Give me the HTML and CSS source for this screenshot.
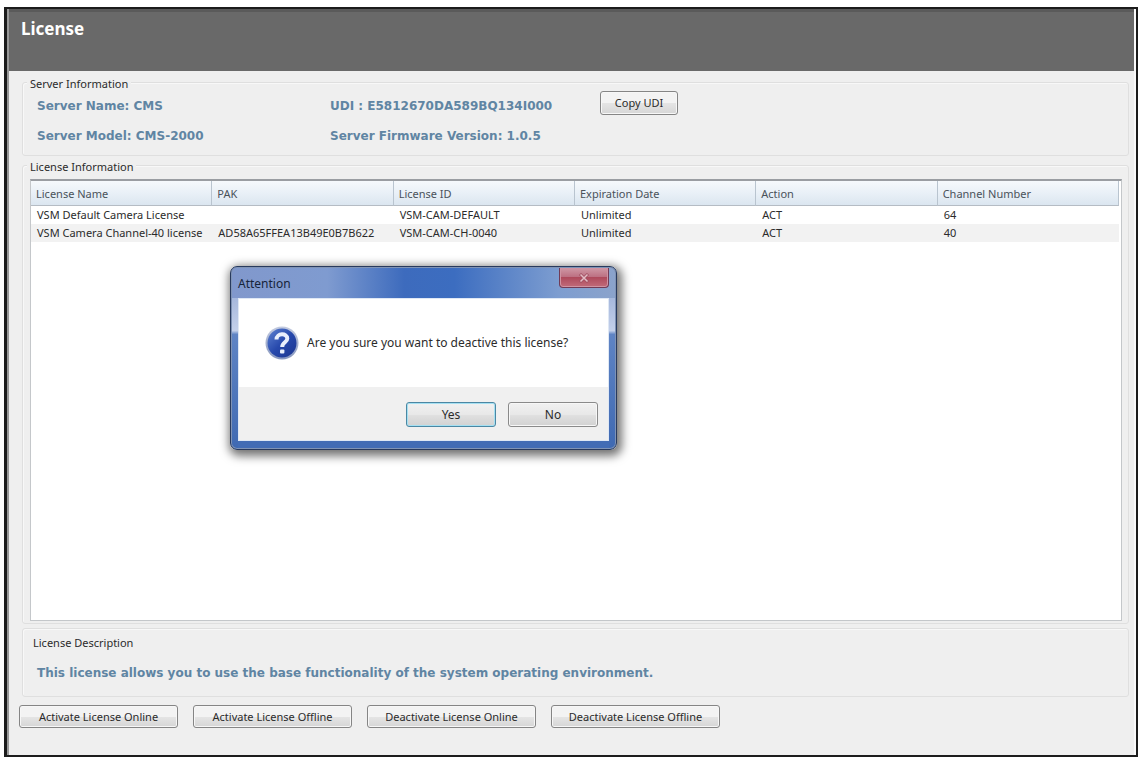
FILE: index.html
```html
<!DOCTYPE html>
<html lang="en">
<head>
<meta charset="utf-8">
<title>License</title>
<link rel="stylesheet" href="styles.css">
</head>
<body>
<div class="window">
  <header class="banner"><h1>License</h1></header>
  <main class="content">
    <section class="group server" aria-labelledby="server-title">
      <h2 class="group-title" id="server-title">Server Information</h2>
      <div class="facts">
        <p class="fact">Server Name: CMS</p>
        <p class="fact">UDI : E5812670DA589BQ134I000</p>
        <button type="button" class="button copy">Copy UDI</button>
        <p class="fact">Server Model: CMS-2000</p>
        <p class="fact">Server Firmware Version: 1.0.5</p>
      </div>
    </section>
    <section class="group licenses" aria-labelledby="list-title">
      <h2 class="group-title" id="list-title">License Information</h2>
      <div class="list">
        <table class="table">
          <thead>
            <tr><th>License Name</th><th>PAK</th><th>License ID</th><th>Expiration Date</th><th>Action</th><th>Channel Number</th></tr>
          </thead>
          <tbody>
            <tr><td>VSM Default Camera License</td><td></td><td>VSM-CAM-DEFAULT</td><td>Unlimited</td><td>ACT</td><td>64</td></tr>
            <tr><td>VSM Camera Channel-40 license</td><td>AD58A65FFEA13B49E0B7B622</td><td>VSM-CAM-CH-0040</td><td>Unlimited</td><td>ACT</td><td>40</td></tr>
          </tbody>
        </table>
      </div>
    </section>
    <section class="group description" aria-labelledby="desc-title">
      <h2 class="desc-title" id="desc-title">License Description</h2>
      <p class="fact">This license allows you to use the base functionality of the system operating environment.</p>
    </section>
  </main>
  <footer class="actions">
    <button type="button" class="button">Activate License Online</button>
    <button type="button" class="button">Activate License Offline</button>
    <button type="button" class="button wide">Deactivate License Online</button>
    <button type="button" class="button wide">Deactivate License Offline</button>
  </footer>

  <div class="dialog" role="dialog" aria-labelledby="dialog-title">
    <div class="dialog-bar">
      <h2 class="dialog-title" id="dialog-title">Attention</h2>
      <button type="button" class="close" aria-label="Close">
        <svg width="12" height="10" viewBox="0 0 12 10" aria-hidden="true"><path d="M2 1l8 8M10 1L2 9" stroke="#a04f62" stroke-width="3"/><path d="M2.500 1.500l7 7M9.500 1.500l-7 7" stroke="#e3bcc5" stroke-width="1.500"/></svg>
      </button>
    </div>
    <div class="dialog-client">
      <div class="message">
        <svg class="question" width="34" height="34" viewBox="0 0 34 34" aria-hidden="true">
          <defs>
            <linearGradient id="rim" x1="0" y1="0" x2="0" y2="1"><stop offset="0" stop-color="#c3cbe0"/><stop offset="1" stop-color="#8797bf"/></linearGradient>
            <linearGradient id="disc" x1="0" y1="0" x2="1" y2="1"><stop offset="0" stop-color="#5f83d2"/><stop offset=".5" stop-color="#2749ac"/><stop offset="1" stop-color="#1c3590"/></linearGradient>
          </defs>
          <circle cx="17" cy="17" r="16.500" fill="url(#rim)"/>
          <circle cx="17" cy="17" r="14.500" fill="url(#disc)"/>
          <path d="M11.500 13.500C11.500 6.800 22.300 6.800 22.300 12.500C22.300 16.500 17.200 16.200 17.200 21" fill="none" stroke="#e9effc" stroke-width="4"/>
          <rect x="15" y="23.500" width="4.400" height="4" rx="1" fill="#e9effc"/>
        </svg>
        <p>Are you sure you want to deactive this license?</p>
      </div>
      <div class="choices">
        <button type="button" class="choice primary">Yes</button>
        <button type="button" class="choice">No</button>
      </div>
    </div>
  </div>
</div>
</body>
</html>
```
FILE: styles.css
```css
* { box-sizing: border-box; }
body {
  margin: 0;
  padding: 7px 1px 0 4px;
  background: #fff;
  color: #2b2b2b;
  font-family: "Noto Sans", "Open Sans", sans-serif;
  font-size: 11px;
  line-height: 16px;
}
h1, h2, p { margin: 0; font-weight: normal; }
button { font: inherit; color: inherit; padding: 0; }
.window {
  position: relative;
  display: flex;
  flex-direction: column;
  min-height: calc(100vh - 7px);
  border: 2px solid #1c1c1c;
  border-left-width: 3px;
  background: #efefef;
  box-shadow: inset 2px 0 #999, inset -2px 0 #fafafa;
}
.banner {
  height: 62px;
  margin: 0 2px;
  padding: 8px 12px;
  background: #696969;
  border-top: 3px solid #5a5a5a;
}
.banner h1 {
  color: #fff;
  font-weight: bold;
  font-size: 17px;
  line-height: 18px;
}
.content {
  flex: 1;
  display: flex;
  flex-direction: column;
  gap: 9px;
  padding: 11px 7px 0 15px;
}
.group { border: 1px solid #dfdfdf; border-radius: 3px; box-shadow: inset 1px 1px #f8f8f8; }
.group-title {
  width: max-content;
  height: 16px;
  margin: -8px 0 0 4px;
  padding: 0 3px;
  background: #efefef;
  font-size: 11px;
  line-height: 18px;
}
.facts {
  display: grid;
  grid-template-columns: 293px 270px 78px;
  grid-template-rows: 30px 30px;
  align-items: center;
  padding: 0 14px 4px;
}
.fact {
  color: #6085a3;
  font-family: "DejaVu Sans", sans-serif;
  font-weight: bold;
  font-size: 12px;
  line-height: 20px;
}
.button {
  width: 159px;
  height: 23px;
  border: 1px solid #858585;
  border-radius: 3px;
  background: linear-gradient(#f3f3f3 0 50%, #e5e5e5 50%, #d6d6d6);
  box-shadow: inset 0 0 0 1px #f7f7f7;
}
.button.wide { width: 169px; }
.button.copy { align-self: start; width: 78px; height: 24px; }
.licenses { flex: 1; display: flex; flex-direction: column; }
.list {
  flex: 1;
  margin: 5px 6px 2px 7px;
  background: #fff;
  border: 1px solid #c4c7ca;
  border-top: 2px solid #9a9da2;
  padding-right: 2px;
}
.table { width: 100%; table-layout: fixed; border-collapse: separate; border-spacing: 0; }
th {
  height: 25px;
  padding: 2px 5px 0;
  text-align: left;
  font-weight: normal;
  color: #4a525a;
  background: linear-gradient(#f6f9fc, #e9f0f7 50%, #dbe6f0);
  border-right: 1px solid #b9c4cf;
  border-bottom: 1px solid #b5bcc4;
}
td { height: 18px; padding: 0 6px; white-space: nowrap; }
tbody tr:nth-child(even) { background: #f2f2f2; }
.description { margin-top: -5px; padding: 6px 14px 13px; }
.desc-title { font-size: 11px; line-height: 16px; margin: 0 0 12px -4px; }
.actions { display: flex; gap: 15px; padding: 8px 12px 27px; }
.dialog {
  position: absolute;
  top: 257px;
  left: 223px;
  width: 387px;
  padding: 1px 7px 8px;
  border: 1px solid #283a5e;
  border-radius: 7px;
  background:
    linear-gradient(90deg, transparent 7px, #426cb5 7px calc(100% - 7px), transparent 0) 0 100% / 100% 8px no-repeat,
    linear-gradient(90deg, #8198cc, #7f9bd0 25%, #3d6bbd 45%, #3c6dc0 58%, #7d9dd0 85%, #8ba3cb) 0 0 / 100% 31px no-repeat,
    linear-gradient(#8ba1cf, #c3d0ea 35%, #5f84c4 37%, #3f69b2);
  box-shadow: inset 0 0 0 1px #7f93b5, 2px 3px 10px 3px rgba(0, 0, 0, .55);
}
.dialog-bar { display: flex; justify-content: space-between; height: 30px; }
.dialog-title { font-size: 12px; line-height: 32px; color: #17243a; }
.close {
  width: 50px;
  height: 20px;
  display: grid;
  place-items: center;
  border: 1px solid #713b56;
  border-top: 0;
  border-radius: 0 0 4px 4px;
  background: linear-gradient(#cf98a5, #bd7183 45%, #ae4a5c 50%, #c16b7a);
  box-shadow: inset 0 0 0 1px #cf93a2;
}
.dialog-client { border: 1px solid #dfe8f5; background: #f0f0f0; }
.message {
  display: flex;
  align-items: center;
  gap: 8px;
  height: 88px;
  padding-left: 26px;
  background: #fff;
  font-size: 12px;
}
.choices { display: flex; justify-content: flex-end; gap: 12px; padding: 15px 10px 13px; }
.choice {
  width: 90px;
  height: 25px;
  border: 1px solid #8a8a8a;
  border-radius: 3px;
  background: linear-gradient(#f1f1f1, #e8e8e8 50%, #dfdfdf 55%, #d2d2d2);
  box-shadow: inset 0 0 0 1px #f7f7f7;
  font-size: 12px;
}
.primary { border-color: #4b87a3; box-shadow: inset 0 0 0 1px #a5e0f2; }
```
